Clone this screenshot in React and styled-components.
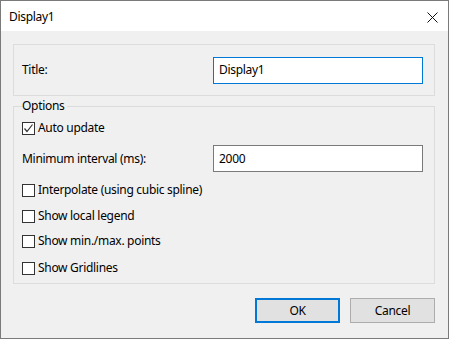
import React from "react";
import styled, { createGlobalStyle } from "styled-components";

const Global = createGlobalStyle`
  html, body { margin: 0; padding: 0; background: #ffffff; }
  * { box-sizing: border-box; }
`;

const Window = styled.div`
  width: 449px;
  height: 339px;
  border: 1px solid #7a7a7a;
  display: flex;
  flex-direction: column;
  font-family: "Noto Sans", "Segoe UI", sans-serif;
  font-size: 12px;
  letter-spacing: -0.3px;
  color: #000;
  background: #f0f0f0;
`;

const TitleBar = styled.div`
  height: 30px;
  background: #ffffff;
  display: flex;
  align-items: center;
  justify-content: space-between;
  padding: 0 10px 0 8px;
  flex: none;
`;

const TitleText = styled.span`
  font-size: 12px;
  line-height: 16px;
  margin-top: 1px;
`;

const CloseIcon = styled.svg`
  width: 11px;
  height: 11px;
  display: block;
  margin-top: 2px;
`;

const Body = styled.div`
  flex: 1;
  padding: 13px 13px 0 12px;
  display: flex;
  flex-direction: column;
`;

const Group = styled.div`
  position: relative;
  border: 1px solid #dcdcdc;
  height: ${(p) => p.$h}px;
  margin-top: ${(p) => p.$mt || 0}px;
  padding: 0 11px 0 8px;
  display: flex;
  flex-direction: column;
  justify-content: ${(p) => (p.$center ? "center" : "flex-start")};
`;

const Legend = styled.span`
  position: absolute;
  left: 8px;
  top: -9px;
  line-height: 16px;
  background: #f0f0f0;
  padding-right: 2px;
`;

const FieldRow = styled.div`
  display: flex;
  align-items: center;
  justify-content: space-between;
  margin-top: ${(p) => p.$mt || 0}px;
  height: ${(p) => p.$h || 27}px;
`;

const Label = styled.span`
  line-height: 16px;
`;

const TextBox = styled.div`
  width: 210px;
  height: 27px;
  background: #ffffff;
  border: 1px solid ${(p) => (p.$focused ? "#0078d7" : "#7a7a7a")};
  padding-left: 5px;
  display: flex;
  align-items: center;
  line-height: 16px;
`;

const CheckRow = styled.div`
  display: flex;
  align-items: center;
  gap: 3px;
  height: ${(p) => p.$h || 20}px;
  margin-top: ${(p) => p.$mt || 0}px;
`;

const Box = styled.span`
  width: 13px;
  height: 13px;
  border: 1px solid #333333;
  background: #ffffff;
  display: flex;
  align-items: center;
  justify-content: center;
  flex: none;
`;

const ButtonBar = styled.div`
  display: flex;
  justify-content: flex-end;
  gap: 10px;
  margin-top: 14px;
`;

const Button = styled.div`
  width: 85px;
  height: 25px;
  background: #e1e1e1;
  border: ${(p) => (p.$default ? "2px solid #0078d7" : "1px solid #adadad")};
  display: flex;
  align-items: center;
  justify-content: center;
  line-height: 16px;
`;

const Check = ({ checked, label, mt, h }) => (
  <CheckRow $mt={mt} $h={h}>
    <Box>
      {checked && (
        <svg width="11" height="11" viewBox="0 0 11 11">
          <path d="M1.5 5.5 L4 8.5 L9.5 1.5" fill="none" stroke="#333" strokeWidth="1.2" />
        </svg>
      )}
    </Box>
    <Label>{label}</Label>
  </CheckRow>
);

export default function App() {
  return (
    <>
      <Global />
      <Window>
        <TitleBar>
          <TitleText>Display1</TitleText>
          <CloseIcon viewBox="0 0 11 11">
            <path d="M0.5 0.5 L10.5 10.5 M10.5 0.5 L0.5 10.5" stroke="#111" strokeWidth="1" fill="none" />
          </CloseIcon>
        </TitleBar>
        <Body>
          <Group $h={52} $center>
            <FieldRow>
              <Label>Title:</Label>
              <TextBox $focused>Display1</TextBox>
            </FieldRow>
          </Group>
          <Group $h={178} $mt={10}>
            <Legend>Options</Legend>
            <Check checked label="Auto update" mt={12} h={18} />
            <FieldRow $mt={8}>
              <Label>Minimum interval (ms):</Label>
              <TextBox>2000</TextBox>
            </FieldRow>
            <Check label="Interpolate (using cubic spline)" mt={8} />
            <Check label="Show local legend" mt={6} />
            <Check label="Show min./max. points" mt={5} />
            <Check label="Show Gridlines" mt={7} />
          </Group>
          <ButtonBar>
            <Button $default>OK</Button>
            <Button>Cancel</Button>
          </ButtonBar>
        </Body>
      </Window>
    </>
  );
}
